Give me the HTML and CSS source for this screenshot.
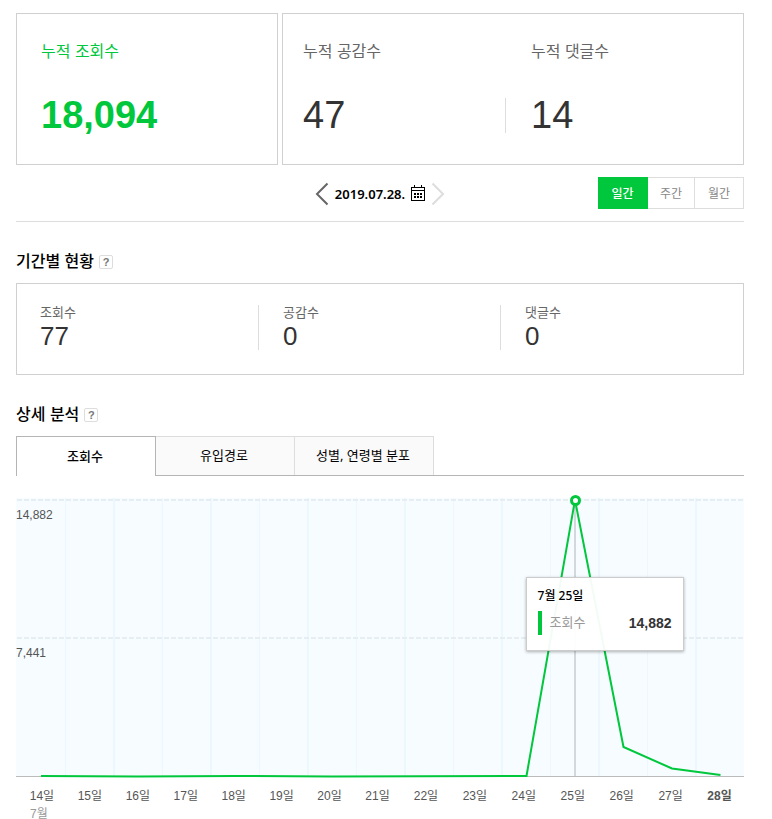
FILE: index.html
```html
<!DOCTYPE html>
<html lang="ko">
<head>
<meta charset="utf-8">
<meta name="viewport" content="width=device-width, initial-scale=1">
<title>블로그 통계</title>
<link rel="stylesheet" href="styles.css">
</head>
<body>
<main class="page">
  <section class="summary">
    <dl class="card total-card">
      <div class="stat primary"><dt>누적 조회수</dt><dd>18,094</dd></div>
    </dl>
    <dl class="card pair-card">
      <div class="stat"><dt>누적 공감수</dt><dd>47</dd></div>
      <div class="stat divided"><dt>누적 댓글수</dt><dd>14</dd></div>
    </dl>
  </section>

  <div class="toolbar">
    <div class="date-nav">
      <button type="button" class="icon-button" aria-label="이전 날짜">
        <svg width="14" height="24" viewBox="0 0 14 24"><path d="M12.500 1.500 2 12l10.500 10.500" fill="none" stroke="#666" stroke-width="2"/></svg>
      </button>
      <button type="button" class="date">2019.07.28.
        <svg width="14" height="16" viewBox="0 0 14 16" shape-rendering="crispEdges">
          <path d="M0 2h14v14H0zM1 3v2h12V3zM1 6v9h12V6z" fill="#000" fill-rule="evenodd"/>
          <path d="M3 0h1v3H3zM10 0h1v3h-1zM3 8h2v2H3zM6 8h2v2H6zM9 8h2v2H9zM3 11h2v2H3zM6 11h2v2H6zM9 11h2v2H9z" fill="#000"/>
        </svg>
      </button>
      <button type="button" class="icon-button" aria-label="다음 날짜" disabled>
        <svg width="14" height="24" viewBox="0 0 14 24"><path d="M1.500 1.500 12 12 1.500 22.500" fill="none" stroke="#ddd" stroke-width="2"/></svg>
      </button>
    </div>
    <div class="range" role="group">
      <button type="button" class="active" aria-pressed="true">일간</button>
      <button type="button">주간</button>
      <button type="button">월간</button>
    </div>
  </div>

  <section class="period">
    <div class="heading"><h2>기간별 현황</h2><button type="button" class="help">?</button></div>
    <dl class="card period-card">
      <div><dt>조회수</dt><dd>77</dd></div>
      <div><dt>공감수</dt><dd>0</dd></div>
      <div><dt>댓글수</dt><dd>0</dd></div>
    </dl>
  </section>

  <section class="detail">
    <div class="heading"><h2>상세 분석</h2><button type="button" class="help">?</button></div>
    <div class="tabs" role="tablist">
      <button type="button" role="tab" aria-selected="true" class="selected">조회수</button>
      <button type="button" role="tab" aria-selected="false">유입경로</button>
      <button type="button" role="tab" aria-selected="false">성별, 연령별 분포</button>
    </div>

    <div class="chart">
      <div class="plot">
        <svg class="graph" viewBox="0 0 728 279" preserveAspectRatio="none">
          <path class="area" d="M0 0h728v278H0z"/>
          <path class="column" d="M49.500 0v278M146.500 0v278M243.500 0v278M340.500 0v278M437.500 0v278M534.500 0v278M631.500 0v278"/>
          <path class="column wide" d="M98 0v278M195 0v278M292 0v278M389 0v278M486 0v278M583 0v278M680 0v278"/>
          <path class="level" d="M1 2h726M1 140h726"/>
          <path class="base" d="M0 278.500h728"/>
          <path class="cursor" d="M559 2v276"/>
          <path class="series" d="M25 278 122 278.500 219 278 316 278.500 510.500 278 559 2 607.500 249 656 270.500 704.500 277"/>
          <circle class="point" cx="559.500" cy="2.500" r="4"/>
        </svg>
        <span class="level-label top">14,882</span>
        <span class="level-label middle">7,441</span>
        <div class="tooltip">
          <strong>7월 25일</strong>
          <div class="reading"><span>조회수</span><b>14,882</b></div>
        </div>
      </div>
      <ol class="days">
        <li>14일<small>7월</small></li>
        <li>15일</li><li>16일</li><li>17일</li><li>18일</li><li>19일</li><li>20일</li><li>21일</li>
        <li>22일</li><li>23일</li><li>24일</li><li>25일</li><li>26일</li><li>27일</li>
        <li class="today">28일</li>
      </ol>
    </div>
  </section>
</main>
</body>
</html>
```
FILE: styles.css
```css
* {
  box-sizing: border-box;
}

body {
  height: 100vh;
  margin: 0;
  overflow: hidden;
  background: #fff;
  color: #333;
  font-family: "Liberation Sans", "Noto Sans CJK KR", sans-serif;
}

button {
  margin: 0;
  padding: 0;
  border: 0;
  background: none;
  color: #000;
  font-family: "Noto Sans", "Noto Sans CJK KR", sans-serif;
  cursor: pointer;
}

dl, dd, h2, ol {
  margin: 0;
  padding: 0;
}

svg {
  display: block;
}

.page {
  padding: 13px 28px 0 16px;
}

.card {
  border: 1px solid #d0d0d0;
}

/* Totals */
.summary {
  display: grid;
  grid-template-columns: 262fr 462fr;
  gap: 4px;
}

.total-card {
  padding: 26px 24px 31px;
}

.pair-card {
  display: grid;
  grid-template-columns: 222fr 238fr;
  padding: 26px 0 31px;
}

.pair-card .stat:first-child {
  padding-left: 20px;
}

.stat dt {
  color: #666;
  font-size: 16px;
  line-height: 24px;
}

.stat dd {
  margin-top: 34px;
  font-size: 38px;
  line-height: 35px;
}

.divided dt {
  padding-left: 26px;
}

.divided dd {
  padding-left: 25px;
  border-left: 1px solid #ddd;
}

.primary dt,
.primary dd {
  color: #00c73c;
}

.primary dd {
  font-weight: 700;
}

/* Date and range */
.toolbar {
  display: grid;
  grid-template-columns: 1fr auto 1fr;
  align-items: center;
  padding: 12px 0;
  border-bottom: 1px solid #ddd;
}

.date-nav {
  display: flex;
  grid-column: 2;
  align-items: center;
  gap: 6px;
  padding-top: 2px;
}

.date {
  display: flex;
  align-items: center;
  gap: 6px;
  font-size: 13px;
  font-weight: 600;
  line-height: 24px;
}

.date svg {
  margin-bottom: 2px;
}

.range {
  display: flex;
  justify-self: end;
}

.range button {
  width: 49px;
  height: 32px;
  border: 1px solid #ddd;
  border-left-width: 0;
  color: #888;
  font-size: 12px;
}

.range button:nth-child(2) {
  width: 47px;
}

.range .active {
  width: 50px;
  border-color: #00c73c;
  background: #00c73c;
  color: #fff;
  font-weight: 500;
}

/* Section headings */
.heading {
  display: flex;
  align-items: center;
  gap: 5px;
  padding: 28px 0 9px;
}

h2 {
  color: #000;
  font-size: 16px;
  font-weight: 500;
  line-height: 24px;
}

.help {
  width: 14px;
  height: 14px;
  border: 1px solid #ddd;
  border-radius: 2px;
  color: #777;
  font-family: "Liberation Sans", sans-serif;
  font-size: 11px;
  font-weight: 700;
  line-height: 12px;
}

/* Period figures */
.period-card {
  display: grid;
  grid-template-columns: 241fr 242fr 243fr;
  padding: 21px 0 24px;
}

.period-card div {
  padding-left: 23px;
}

.period-card div + div {
  padding-left: 24px;
  border-left: 1px solid #ddd;
}

.period-card dt {
  color: #666;
  font-size: 13px;
  line-height: 15px;
}

.period-card dd {
  padding-top: 2px;
  font-size: 26px;
  line-height: 28px;
}

/* Tabs */
.tabs {
  display: flex;
  border-bottom: 1px solid #b5b5b5;
}

.tabs button {
  width: 139px;
  height: 39px;
  padding: 0 2px 3px 0;
  border: 1px solid #ddd;
  border-width: 1px 1px 0 0;
  background: #fafafa;
  font-size: 13px;
}

.tabs .selected {
  width: 140px;
  height: 40px;
  margin-bottom: -1px;
  border-color: #b5b5b5;
  border-left-width: 1px;
  background: #fff;
  font-weight: 500;
}

/* Chart */
.chart {
  margin-top: 22px;
}

.plot {
  position: relative;
}

.graph {
  width: 100%;
  height: 279px;
  overflow: visible;
}

.area {
  fill: #f6fcff;
}

.column,
.level,
.base,
.cursor,
.series {
  fill: none;
}

.column {
  stroke: #edf8fe;
}

.wide {
  stroke-width: 2;
}

.level {
  stroke: #e6eef2;
  stroke-width: 2;
  stroke-dasharray: 5 2;
}

.base {
  stroke: #bbb;
}

.cursor {
  stroke: #d3d8dc;
  stroke-width: 2;
}

.series {
  stroke: #00c73c;
  stroke-width: 2;
}

.point {
  fill: #fff;
  stroke: #00c73c;
  stroke-width: 3;
}

.level-label {
  position: absolute;
  left: 0;
  color: #555;
  font-size: 12px;
  line-height: 16px;
}

.top {
  top: 9px;
}

.middle {
  top: 147px;
}

.tooltip {
  position: absolute;
  top: 79px;
  left: 70%;
  width: 158px;
  padding: 8px 11px 15px 11px;
  border: 1px solid #ccc;
  background: rgba(255, 255, 255, 0.95);
  box-shadow: 0 1px 3px rgba(0, 0, 0, 0.3);
}

.tooltip strong {
  display: block;
  margin-bottom: 5px;
  color: #000;
  font-family: "Noto Sans", "Noto Sans CJK KR", sans-serif;
  font-size: 12px;
  font-weight: 500;
  line-height: 20px;
}

.reading {
  display: flex;
  justify-content: space-between;
  padding-left: 8px;
  border-left: 4px solid #00c73c;
  font-size: 13px;
  line-height: 24px;
}

.reading span {
  color: #999;
}

.reading b {
  font-size: 14px;
}

.days {
  display: grid;
  grid-template-columns: repeat(8, 48fr) repeat(7, 49fr);
  margin-top: 10px;
  padding-left: 2px;
  list-style: none;
  color: #555;
  font-size: 12px;
  line-height: 18px;
  text-align: center;
}

.days small {
  display: block;
  padding-right: 6px;
  color: #999;
  font-size: 12px;
}

.today {
  font-weight: 700;
}
```
